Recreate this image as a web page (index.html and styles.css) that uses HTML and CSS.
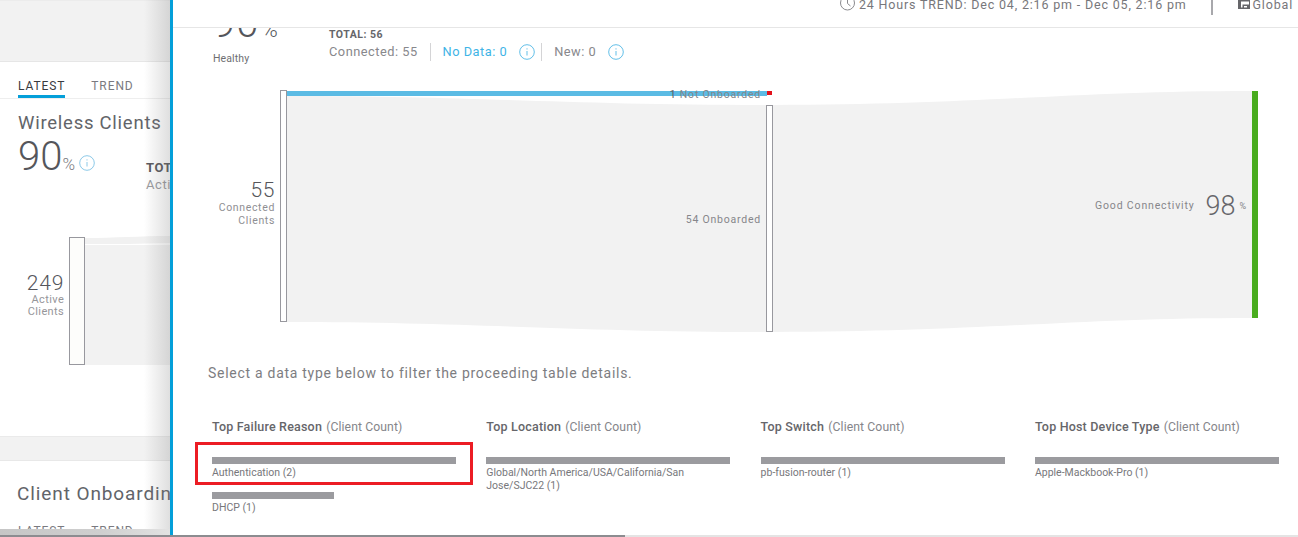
FILE: index.html
```html
<!DOCTYPE html>
<html lang="en">
<head>
<meta charset="utf-8">
<title>Client Health</title>
<link rel="stylesheet" href="styles.css">
</head>
<body>
<div class="page">
  <aside class="behind">
    <div class="behind-top"></div>
    <nav class="tabs">
      <span class="tab active">LATEST</span>
      <span class="tab">TREND</span>
    </nav>
    <h2 class="behind-title">Wireless Clients</h2>
    <div class="behind-metric">
      <div class="behind-score">
        <span class="behind-num">90</span><span class="behind-pct">%</span>
        <svg class="info behind-info" viewBox="0 0 16 16"><circle cx="8" cy="8" r="7.300"/><path d="M8 7v4.500M8 4.300v1.200"/></svg>
      </div>
      <div class="behind-total"><b>TOTAL</b><span>Active</span></div>
    </div>
    <div class="behind-chart">
      <div class="behind-label"><span class="behind-count">249</span><span>Active</span><span>Clients</span></div>
      <div class="behind-node"></div>
      <svg class="behind-flow" viewBox="0 0 85 128" preserveAspectRatio="none">
        <path class="flow-top" d="M0 1C30 1 55 -1 85 -1V6C55 7 30 7 0 7Z"/>
        <path class="flow" d="M0 8C30 8 55 8 85 8V128H0Z"/>
      </svg>
    </div>
    <div class="behind-sep"></div>
    <h2 class="behind-title second">Client Onboarding</h2>
    <nav class="tabs tabs-clipped">
      <span class="tab">LATEST</span>
      <span class="tab">TREND</span>
    </nav>
  </aside>

  <main class="panel">
    <header class="panel-head">
      <svg class="clock" viewBox="0 0 15 11"><circle cx="7.500" cy="3" r="7"/><path d="M7.500 0v3.500l3 2.500"/></svg>
      <span class="trend">24 Hours TREND: Dec 04, 2:16 pm - Dec 05, 2:16 pm</span>
      <span class="head-div"></span>
      <svg class="site" viewBox="0 0 12 9"><path d="M0 0h12v9H0zM3 1.500v6h1.500v-3H11v-3zM6 6v1.500h3V6z" fill-rule="evenodd"/></svg>
      <span class="trend">Global</span>
    </header>

    <section class="summary">
      <div class="health">
        <div class="health-num">90<span class="health-pct">%</span></div>
        <div class="health-label">Healthy</div>
      </div>
      <div class="totals">
        <div class="total-line">TOTAL: 56</div>
        <div class="stats">
          <span class="stat stat-first">Connected: 55</span>
          <span class="stat stat-div link">No Data: 0
            <svg class="info" viewBox="0 0 16 16"><circle cx="8" cy="8" r="7.300"/><path d="M8 7v4.500M8 4.300v1.200"/></svg>
          </span>
          <span class="stat stat-div">New: 0
            <svg class="info" viewBox="0 0 16 16"><circle cx="8" cy="8" r="7.300"/><path d="M8 7v4.500M8 4.300v1.200"/></svg>
          </span>
        </div>
      </div>
    </section>

    <section class="sankey">
      <svg class="sankey-svg" viewBox="0 0 1125 260">
        <path class="flow" d="M114 6C300 6 400 15 593 15V242C400 242 300 232 114 232Z"/>
        <path class="flow" d="M600 15C800 15 900 1 1079 1V228C900 228 800 242 600 242Z"/>
        <rect class="blue" x="114" y="1" width="480" height="5"/>
        <rect class="red" x="594" y="1" width="5" height="4"/>
        <rect class="node" x="107.500" y="0.500" width="6" height="231"/>
        <rect class="node" x="593.500" y="15.500" width="6" height="226"/>
        <rect class="green" x="1079" y="1" width="6" height="227"/>
      </svg>
      <div class="node-label connected"><span class="count">55</span><span>Connected</span><span>Clients</span></div>
      <div class="flow-label not-onboarded"><b>1</b> Not Onboarded</div>
      <div class="flow-label onboarded">54 Onboarded</div>
      <div class="flow-label good">Good Connectivity <span class="good-num">98</span> <span class="good-pct">%</span></div>
    </section>

    <p class="hint">Select a data type below to filter the proceeding table details.</p>

    <section class="tops">
      <div class="top">
        <h3><b>Top Failure Reason</b> (Client Count)</h3>
        <div class="item highlighted"><div class="bar"></div><div class="item-label">Authentication (2)</div></div>
        <div class="item"><div class="bar half"></div><div class="item-label">DHCP (1)</div></div>
      </div>
      <div class="top">
        <h3><b>Top Location</b> (Client Count)</h3>
        <div class="item"><div class="bar"></div><div class="item-label">Global/North America/USA/California/San Jose/SJC22 (1)</div></div>
      </div>
      <div class="top">
        <h3><b>Top Switch</b> (Client Count)</h3>
        <div class="item"><div class="bar"></div><div class="item-label">pb-fusion-router (1)</div></div>
      </div>
      <div class="top">
        <h3><b>Top Host Device Type</b> (Client Count)</h3>
        <div class="item"><div class="bar"></div><div class="item-label">Apple-Mackbook-Pro (1)</div></div>
      </div>
    </section>
  </main>
  <div class="scroll"><div class="scroll-thumb"></div></div>
</div>
</body>
</html>
```
FILE: styles.css
```css
* { box-sizing: border-box; }
html, body { margin: 0; height: 100%; overflow: hidden; background: #fff; }
body { font-family: Roboto, "Liberation Sans", sans-serif; color: #6f6f72; }
h2, h3, p { margin: 0; font-weight: 400; }

.page { position: relative; display: flex; width: 1298px; height: 537px; overflow: hidden; }

/* Dashboard behind the slide-in */
.behind { position: relative; width: 170px; height: 537px; flex: none; overflow: hidden; white-space: nowrap; }
.behind::before { content: ""; position: absolute; left: 0; right: 0; bottom: 2px; height: 6px; background: linear-gradient(to right, #c6c6c6, #cfcfcf 60%, #e2e2e2); z-index: 1; }
.behind::after { content: ""; position: absolute; top: 0; right: 0; bottom: 0; width: 26px; background: linear-gradient(to right, rgba(120,120,120,0), rgba(120,120,120,.24)); }
.behind-top { height: 62px; background: #f2f2f2; border-top: 1px solid #ececec; border-bottom: 1px solid #e6e6e6; }
.tabs { display: flex; gap: 26px; height: 37px; padding: 17px 0 0 18px; border-bottom: 1px solid #eee; font-size: 12px; letter-spacing: .9px; line-height: 14px; }
.tab { height: 19px; color: #7a7a80; font-weight: 400; }
.tab.active { color: #3a3a40; border-bottom: 3px solid #049fd9; }
.behind-title { margin: 13px 0 0 18px; font-size: 18.500px; line-height: 22px; letter-spacing: .75px; font-weight: 400; color: #626469; }
.behind-metric { display: flex; padding-left: 18px; height: 103px; }
.behind-score { display: flex; align-items: baseline; flex: none; width: 128px; height: 44px; }
.behind-num { font-size: 40px; line-height: 46px; font-weight: 300; color: #55565b; }
.behind-pct { font-size: 17px; margin-left: 0; color: #7a7a80; font-weight: 300; }
.behind-info { width: 16px; height: 16px; margin: 14px 0 0 4px; align-self: center; }
.behind-total { display: flex; flex: none; flex-direction: column; padding-top: 25px; font-size: 13px; line-height: 17px; letter-spacing: .6px; color: #9a9a9e; }
.behind-total b { color: #58585c; }
.behind-chart { display: flex; height: 128px; margin-top: 0; }
.behind-label { display: flex; flex-direction: column; align-items: flex-end; width: 65px; padding-top: 36px; font-size: 11px; line-height: 12px; letter-spacing: .4px; color: #96969a; }
.behind-count { font-size: 21px; line-height: 21px; font-weight: 300; color: #55565b; letter-spacing: .8px; }
.behind-node { width: 16px; height: 128px; margin-left: 5px; background: #fdfdfb; border: 1px solid #98989e; }
.behind-flow { width: 85px; height: 128px; overflow: visible; }
.flow-top { fill: #f1f1f1; }
.flow { fill: #f2f2f2; }
.behind-sep { height: 25px; margin-top: 71px; background: #f2f2f2; border-top: 1px solid #eaeaea; border-bottom: 1px solid #e8e8e8; }
.behind-title.second { margin-top: 22px; margin-left: 17px; font-size: 19px; letter-spacing: .9px; }
.tabs-clipped { border: 0; padding-top: 19px; color: #7a7a80; }

/* Slide-in panel */
.panel { position: relative; z-index: 2; width: 1128px; height: 537px; flex: none; background: #fff; border-left: 3px solid #049fd9; overflow: hidden; }
.panel-head { display: flex; align-items: flex-start; justify-content: flex-end; height: 28px; padding-right: 5px; border-bottom: 1px solid #e6e6e6; }
.trend { margin-top: -3px; font-size: 12.500px; line-height: 15px; letter-spacing: .82px; color: #77777b; white-space: nowrap; }
.clock { width: 15px; height: 11px; margin-right: 4px; fill: none; stroke: #8a8a8e; stroke-width: 1; }
.head-div { width: 2px; height: 15px; margin: 0 25px 0 24px; background: #a8a8ac; }
.site { width: 12px; height: 9px; margin-right: 3px; fill: #66666a; }

.summary { display: flex; height: 62px; overflow: hidden; }
.health { width: 156px; padding-left: 40px; }
.health-num { height: 22px; margin-top: -27px; font-size: 40px; line-height: 46px; font-weight: 300; color: #55565b; letter-spacing: 1px; white-space: nowrap; }
.health-pct { font-size: 22px; font-weight: 300; margin-left: 2px; }
.health-label { margin-top: 30px; font-size: 10.500px; line-height: 12px; color: #6e6e72; letter-spacing: .1px; }
.totals { padding-top: 1px; }
.total-line { font-size: 10.500px; line-height: 12px; font-weight: 700; color: #66666a; letter-spacing: .5px; }
.stats { display: flex; height: 18px; margin-top: 2px; font-size: 12.800px; line-height: 18px; letter-spacing: .5px; color: #88888c; white-space: nowrap; }
.stat { display: flex; align-items: center; gap: 12px; }
.stat-first { padding-right: 12px; }
.stat-div { padding-left: 12px; border-left: 1px solid #d4d4d6; }
.link { color: #3fb4e6; padding-right: 6px; }
.info { width: 16px; height: 16px; flex: none; fill: none; stroke: #62bfe8; stroke-width: 1; }
.behind-info { stroke: #8cc9e8; }

.sankey { position: relative; width: 1125px; height: 260px; }
.sankey-svg { display: block; width: 1125px; height: 260px; position: absolute; top: 0; left: 0; }
.blue { fill: #5bbbe4; }
.red { fill: #e2111b; }
.green { fill: #49ac1e; }
.node { fill: #fff; stroke: #98989e; stroke-width: 1; }
.node-label { position: absolute; left: 0; top: 89px; width: 102px; display: flex; flex-direction: column; align-items: flex-end; font-size: 10.500px; line-height: 13px; letter-spacing: .65px; color: #8f8f93; }
.count { font-size: 21px; line-height: 22px; font-weight: 300; color: #55565b; letter-spacing: .6px; }
.flow-label { position: absolute; font-size: 10.500px; line-height: 12px; letter-spacing: .78px; color: #86868a; white-space: nowrap; }
.flow-label b { font-weight: 400; color: #58585c; }
.not-onboarded { right: 537px; top: -1px; }
.onboarded { right: 537px; top: 124px; }
.good { right: 51px; top: 116px; display: flex; align-items: center; gap: 9px; height: 26px; margin-top: -13px; letter-spacing: .85px; }
.good-num { font-size: 27px; font-weight: 300; color: #66666a; letter-spacing: 0; margin-left: 2px; }
.good-pct { font-size: 9px; margin-left: -5px; }

.hint { margin: 13px 0 0 35px; height: 20px; font-size: 14px; line-height: 20px; letter-spacing: .72px; color: #7d7d81; white-space: nowrap; }

.tops { display: grid; grid-template-columns: repeat(4, 244px); column-gap: 30.300px; margin-top: 37px; padding-left: 39px; }
.top h3 { height: 37px; font-size: 12.200px; line-height: 14px; letter-spacing: .1px; color: #85858a; white-space: nowrap; }
.top h3 b { margin-right: 1px; font-size: 12.500px; letter-spacing: .19px; font-weight: 500; color: #66666a; }
.item { position: relative; margin-bottom: 13px; }
.bar { height: 7px; background: #9b9b9f; }
.bar.half { width: 122px; }
.item-label { margin-top: 2px; font-size: 10.500px; line-height: 13px; color: #77777b; }
.highlighted::after { content: ""; position: absolute; left: -17px; right: -17px; top: -15px; bottom: -6px; border: 3px solid #ec1c24; }

.scroll { position: absolute; z-index: 3; left: 0; right: 0; bottom: 0; height: 2px; background: #e4e4e4; }
.scroll-thumb { width: 625px; height: 2px; background: #8c8c90; }
```
